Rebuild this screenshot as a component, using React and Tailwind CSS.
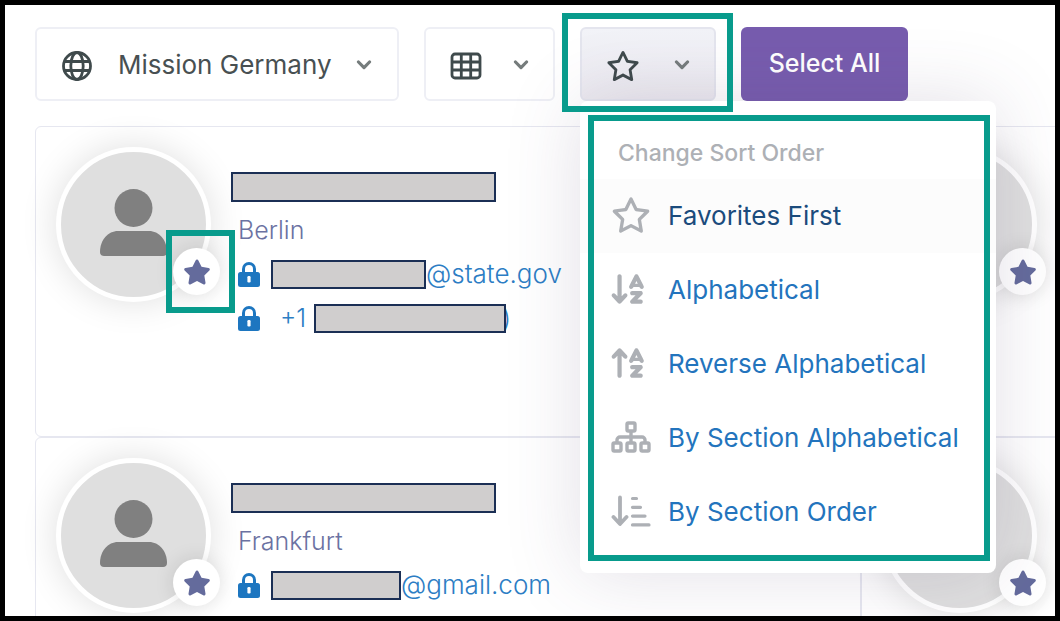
import React from "react";
import { FaStar, FaRegStar, FaArrowDownAZ, FaArrowUpAZ } from "react-icons/fa6";

function Chevron() {
  return (
    <svg className="mt-0.5 h-2.5 w-4" viewBox="0 0 16 10" fill="none" stroke="#757c7c" strokeWidth="3.2" strokeLinecap="round" strokeLinejoin="round" aria-hidden="true">
      <path d="M2.5 2 8 7.6 13.5 2" />
    </svg>
  );
}

function Globe() {
  return (
    <svg className="mt-1 size-[30px]" viewBox="0 0 30 30" fill="none" stroke="#3f4a4c" strokeWidth="2.8" aria-hidden="true">
      <circle cx="15" cy="15" r="13.5" />
      <ellipse cx="15" cy="15" rx="6.2" ry="13.5" />
      <path d="M2 10.5h26M2 19.5h26" />
    </svg>
  );
}

function TableIcon() {
  return (
    <svg className="mt-1 h-7 w-8" viewBox="0 0 32 28" fill="none" stroke="#3f4a4c" strokeWidth="2.8" aria-hidden="true">
      <rect x="2" y="2" width="28" height="24" rx="3" />
      <path d="M2 10h28M2 18h28M11.3 2v24M20.7 2v24" />
    </svg>
  );
}

function Lock() {
  return (
    <svg className="h-[25px] w-[22px] shrink-0" viewBox="0 0 22 25" aria-hidden="true">
      <path d="M5.5 11V7a5.5 5.5 0 0 1 11 0v4" fill="none" stroke="#1d76c0" strokeWidth="3" />
      <rect x="0" y="10" width="22" height="15" rx="2.5" fill="#1d76c0" />
      <rect x="9.4" y="14" width="3.2" height="6.5" rx="1.2" fill="#fff" />
    </svg>
  );
}

function Sitemap() {
  return (
    <svg className="h-8 w-10" viewBox="0 0 40 32" fill="none" stroke="currentColor" strokeWidth="3.4" strokeLinejoin="round" aria-hidden="true">
      <rect x="16" y="2" width="8" height="8" rx="1.2" />
      <rect x="2" y="22" width="8" height="8" rx="1.2" />
      <rect x="16" y="22" width="8" height="8" rx="1.2" />
      <rect x="30" y="22" width="8" height="8" rx="1.2" />
      <path d="M20 10v12M6 22v-3a3 3 0 0 1 3-3h22a3 3 0 0 1 3 3v3" />
    </svg>
  );
}

function ShortWide() {
  return (
    <svg className="h-8 w-10" viewBox="0 0 40 32" fill="none" stroke="currentColor" strokeLinecap="round" strokeLinejoin="round" aria-hidden="true">
      <path d="M9 2.5v26M2.5 22 9 29l6.500-7" strokeWidth="3.8" />
      <path d="M21.500 3.500h4M21.500 12.300h8M21.500 21.100h12.500M21.500 29.900h16.500" strokeWidth="3.2" />
    </svg>
  );
}

function Person() {
  return (
    <svg className="h-[67px] w-[67px]" viewBox="0 0 67 67" fill="#808080" aria-hidden="true">
      <circle cx="33.500" cy="19" r="19" />
      <path d="M18 42h31c10 0 18 9 18 21 0 2.500-1.500 4-4 4H4c-2.500 0-4-1.500-4-4 0-12 8-21 18-21Z" />
    </svg>
  );
}

function Redacted({ className }) {
  return <span className={`relative block shrink-0 border-2 border-[#1b2f55] bg-[#d0cece] ${className}`} aria-hidden="true" />;
}

function Avatar({ highlighted }) {
  return (
    <div className="relative size-[155px] shrink-0">
      <div className="flex size-full items-center justify-center rounded-full border-[5px] border-white bg-[#dfdfdf] pb-1 shadow-[0_0_36px_rgba(0,0,0,0.13)]">
        <Person />
      </div>
      <button type="button" aria-label="Favorite" className="absolute top-[101px] left-[117px] flex size-[47px] items-center justify-center rounded-full bg-white text-[#646b9c] shadow-[0_0_20px_rgba(0,0,0,0.12)]">
        <FaStar className="size-7" />
      </button>
      {highlighted && (
        <div className="pointer-events-none absolute top-[83px] left-[110px] h-[83px] w-[69px] border-[6px] border-[#089b8c]" />
      )}
    </div>
  );
}

function Card({ contact, highlighted }) {
  return (
    <article className="flex h-[311px] gap-5 rounded-md border border-[#e6e7f0] p-5">
      <Avatar highlighted={highlighted} />
      {contact && (
        <div className="pt-[25px] text-[25px] leading-[44px] font-light">
          <Redacted className="h-[30px] w-[265px]" />
          <div className="mt-1.5 pl-[7px]">
            <p className="text-[#6b72a2]">{contact.city}</p>
            <div className="flex items-center text-[#2c7dc4]">
              <Lock />
              <Redacted className={`ml-[11px] h-[29px] ${contact.emailWidth}`} />
              <a href="#email" className="text-[26px]">{contact.domain}</a>
            </div>
            {contact.phone && (
              <div className="flex items-center text-[#2c7dc4]">
                <Lock />
                <a href="#phone" className="ml-5 flex items-center">
                  {contact.phone}
                  <Redacted className="z-10 ml-2 h-[29px] w-[192px]" />
                  <span className="-ml-1">)</span>
                </a>
              </div>
            )}
          </div>
        </div>
      )}
    </article>
  );
}

const contacts = [
  { city: "Berlin", domain: "@state.gov", emailWidth: "w-[155px]", phone: "+1" },
  null,
  { city: "Frankfurt", domain: "@gmail.com", emailWidth: "w-[130px]" },
  null,
];

const sortOptions = [
  { label: "Favorites First", icon: <FaRegStar className="size-10" />, active: true },
  { label: "Alphabetical", icon: <FaArrowDownAZ className="-ml-0.5 size-[38px]" /> },
  { label: "Reverse Alphabetical", icon: <FaArrowUpAZ className="-ml-0.5 size-[38px]" /> },
  { label: "By Section Alphabetical", icon: <Sitemap /> },
  { label: "By Section Order", icon: <ShortWide /> },
];

function SortMenu() {
  return (
    <div className="absolute top-full left-0 z-20 w-[416px] rounded-lg bg-white pt-[26px] pb-6 shadow-[0_0_75px_rgba(82,63,105,0.17)]">
      <h2 className="h-[52px] px-[38px] text-[23px] leading-[52px] font-medium text-[#adb0b5]">Change Sort Order</h2>
      <ul>
        {sortOptions.map((option) => (
          <li key={option.label}>
            <button
              type="button"
              className={`flex h-[74px] w-full items-center pb-0.5 pl-[31px] text-left text-[26px] whitespace-nowrap ${option.active ? "bg-[#fcfcfc] text-[#1b4b7c]" : "text-[#2374bd]"}`}
            >
              <span className="w-[57px] text-[#adb0b5]">{option.icon}</span>
              {option.label}
            </button>
          </li>
        ))}
      </ul>
      <div className="pointer-events-none absolute top-3.5 right-1.5 bottom-3 left-2 border-[6px] border-[#089b8c]" />
    </div>
  );
}

export default function App() {
  return (
    <main className="h-screen overflow-hidden border-[5px] border-black bg-white pt-[22px] pl-[30px] font-['Inter',sans-serif]">
      <div className="flex h-[74px] gap-[25px]">
        <button type="button" aria-haspopup="listbox" className="flex w-[364px] items-center rounded-md border-2 border-[#eeeff5] pr-[25px] pl-[25px] text-[26px] text-[#485052]">
          <Globe />
          <span className="ml-[26px] flex-1 text-left whitespace-nowrap">Mission Germany</span>
          <Chevron />
        </button>
        <button type="button" aria-label="View" className="flex w-[131px] items-center justify-between rounded-md border-2 border-[#eeeff5] px-6">
          <TableIcon />
          <Chevron />
        </button>
        <div className="relative">
          <button type="button" aria-label="Sort order" aria-expanded="true" className="flex h-full w-[136px] items-center justify-between rounded-md border-2 border-[#e4e5ee] bg-linear-to-b from-[#f2f3f8] to-[#eceaf0] px-6">
            <FaRegStar className="mt-1 size-[34px] text-[#3f4a4c]" />
            <Chevron />
          </button>
          <SortMenu />
          <div className="pointer-events-none absolute -top-3.5 -right-[17px] -bottom-[11px] -left-[18px] z-30 border-[6px] border-[#089b8c]" />
        </div>
        <button type="button" className="w-[167px] rounded-md bg-[#775cae] text-[25px] font-medium text-white">
          Select All
        </button>
      </div>
      <section className="mt-[25px] grid grid-cols-[81%_81%]">
        {contacts.map((contact, index) => (
          <Card key={index} contact={contact} highlighted={index === 0} />
        ))}
      </section>
    </main>
  );
}
